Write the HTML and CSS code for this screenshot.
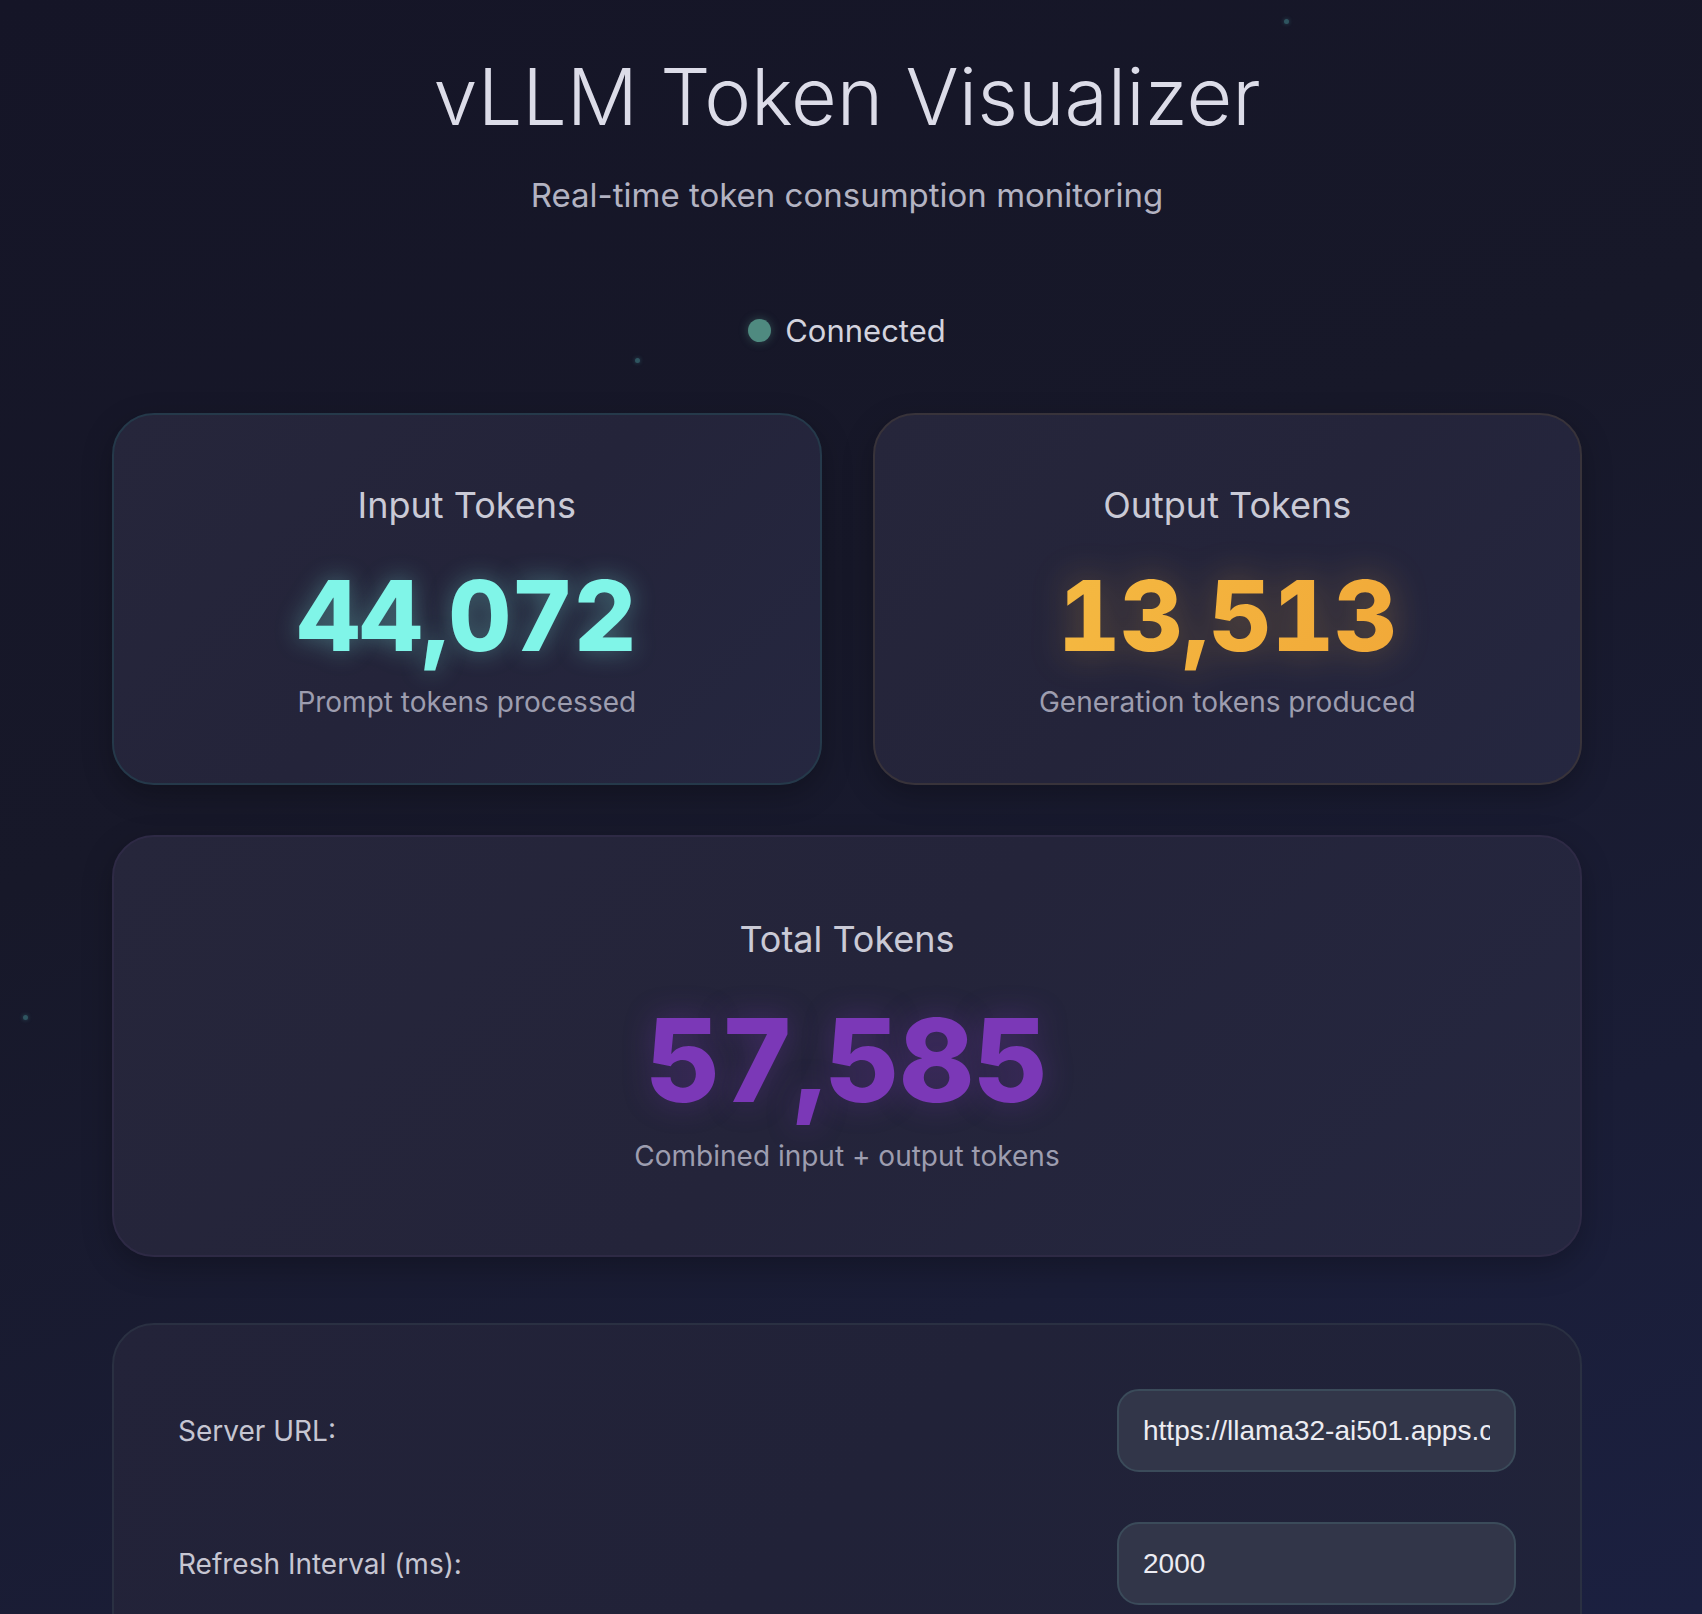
FILE: index.html
```html
<!DOCTYPE html>
<html lang="en">
<head>
<meta charset="utf-8">
<title>vLLM Token Visualizer</title>
<link rel="stylesheet" href="styles.css">
</head>
<body>
<div class="particles">
  <span class="particle p1"></span>
  <span class="particle p2"></span>
  <span class="particle p3"></span>
</div>
<main class="container">
  <header class="header">
    <h1 class="title">vLLM Token Visualizer</h1>
    <p class="subtitle">Real-time token consumption monitoring</p>
  </header>

  <div class="status">
    <span class="status-dot"></span>
    <span class="status-text">Connected</span>
  </div>

  <section class="grid">
    <div class="card card-input">
      <h2 class="card-label">Input Tokens</h2>
      <div class="card-value value-input">44,072</div>
      <p class="card-desc">Prompt tokens processed</p>
    </div>
    <div class="card card-output">
      <h2 class="card-label">Output Tokens</h2>
      <div class="card-value value-output">13,513</div>
      <p class="card-desc">Generation tokens produced</p>
    </div>
  </section>

  <section class="card card-total">
    <h2 class="card-label">Total Tokens</h2>
    <div class="card-value value-total">57,585</div>
    <p class="card-desc">Combined input + output tokens</p>
  </section>

  <section class="settings">
    <div class="setting-row">
      <label class="setting-label" for="url">Server URL:</label>
      <input class="setting-input" id="url" type="text" value="https://llama32-ai501.apps.cluster.example.com">
    </div>
    <div class="setting-row">
      <label class="setting-label" for="interval">Refresh Interval (ms):</label>
      <input class="setting-input" id="interval" type="text" value="2000">
    </div>
  </section>
</main>
</body>
</html>
```

FILE: styles.css
```css
* { box-sizing: border-box; }

html, body { height: 100%; }

body {
  margin: 0;
  padding: 0 8px 0 0;
  min-height: 1614px;
  background: linear-gradient(160deg, #151527 0%, #171829 40%, #1a1d36 75%, #1b2040 100%);
  font-family: Inter, "Noto Sans", sans-serif;
  color: #d6d6e2;
  overflow: hidden;
}

.particles { position: absolute; inset: 0; pointer-events: none; }
.particle {
  position: absolute;
  width: 5px; height: 5px;
  border-radius: 50%;
  background: #2f5560;
  box-shadow: 0 0 4px rgba(80, 160, 170, 0.4);
}
.p1 { left: 1284px; top: 19px; }
.p2 { left: 635px; top: 358px; }
.p3 { left: 23px; top: 1015px; }

.container {
  width: 1470px;
  margin: 0 auto;
}

.header { text-align: center; padding-top: 48px; }

.title {
  margin: 0;
  font-size: 79px;
  font-weight: 300;
  line-height: 97px;
  letter-spacing: 0;
  color: #dcdce8;
}

.subtitle {
  margin: 30px 0 0;
  font-size: 33px;
  line-height: 40px;
  font-weight: 400;
  color: #b3b3c2;
}

.status {
  display: flex;
  justify-content: center;
  align-items: center;
  gap: 14px;
  margin-top: 95px;
  height: 40px;
}
.status-dot {
  width: 23px; height: 23px;
  border-radius: 50%;
  background: #4f8a80;
  box-shadow: 0 0 10px rgba(79, 138, 128, 0.45);
}
.status-text {
  font-size: 31px;
  font-weight: 400;
  color: #d3d3de;
}

.grid {
  display: grid;
  grid-template-columns: 1fr 1fr;
  gap: 51px;
  margin-top: 63px;
}

.card {
  background: linear-gradient(135deg, #26263b 0%, #24243a 50%, #252740 100%);
  border: 2px solid #2b2d42;
  border-radius: 42px;
  text-align: center;
  box-shadow: 0 10px 30px rgba(0, 0, 0, 0.25);
}

.card-input { border-color: #25394a; padding: 68px 20px 58px; height: 372px; }
.card-output { border-color: #38333a; padding: 68px 20px 58px; height: 372px; }

.card-label {
  margin: 0;
  font-size: 36px;
  line-height: 44px;
  font-weight: 400;
  color: #cacad6;
}

.card-value {
  margin-top: 34px;
  font-size: 97px;
  line-height: 110px;
  font-weight: 800;
  letter-spacing: 0;
  font-variant-numeric: tabular-nums;
}

.value-input {
  color: #80f5e8;
  text-shadow: 0 0 24px rgba(128, 245, 232, 0.35);
}
.value-output {
  background: linear-gradient(120deg, #f6c045, #f0a235);
  -webkit-background-clip: text;
  background-clip: text;
  color: transparent;
  filter: drop-shadow(0 0 18px rgba(245, 180, 60, 0.3));
}

.card-desc {
  margin: 14px 0 0;
  font-size: 28px;
  line-height: 34px;
  color: #9d9daf;
}

.card-total {
  margin-top: 50px;
  height: 422px;
  padding: 80px 20px 0;
  border-color: #2e2a45;
}
.value-total {
  margin-top: 35px;
  font-size: 115px;
  line-height: 130px;
  color: #7b38b7;
  text-shadow: 0 0 30px rgba(123, 56, 183, 0.35);
}
.card-total .card-desc { margin-top: 13px; }

.settings {
  margin-top: 66px;
  background: linear-gradient(135deg, #232339 0%, #212238 50%, #20233a 100%);
  border: 2px solid #2a3042;
  border-radius: 42px;
  padding: 64px 64px 64px 64px;
  display: flex;
  flex-direction: column;
  gap: 50px;
}

.setting-row {
  display: flex;
  justify-content: space-between;
  align-items: center;
}

.setting-label {
  font-size: 28px;
  color: #c6c6d2;
}

.setting-input {
  width: 399px;
  height: 83px;
  padding: 0 24px;
  background: #323649;
  border: 2px solid #3b4b5a;
  border-radius: 22px;
  color: #ececf2;
  font-family: "Liberation Sans", Arial, sans-serif;
  font-size: 28px;
  outline: none;
}
```
